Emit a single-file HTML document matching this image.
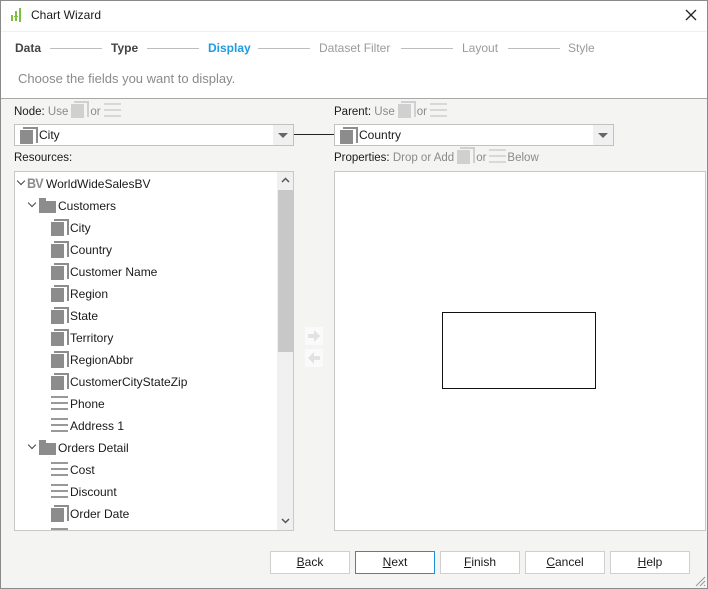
<!DOCTYPE html>
<html><head><meta charset="utf-8"><style>
*{margin:0;padding:0;box-sizing:border-box}
body{width:708px;height:589px;overflow:hidden;background:#f4f4f2;font-family:"Liberation Sans",sans-serif;font-size:12px;color:#1a1a1a;position:relative}
.a{position:absolute;white-space:nowrap}
.frame{position:absolute;left:0;top:0;width:708px;height:589px;border:1px solid #8a8a8a;pointer-events:none}
.dim{position:absolute;width:16px;height:17px}
.dim:before{content:"";position:absolute;left:3px;top:0;width:13px;height:14px;border-top:2px solid #8c8c8c;border-right:2px solid #8c8c8c}
.dim:after{content:"";position:absolute;left:0;top:3px;width:13px;height:14px;background:#8c8c8c}
.dim.l:before{border-color:#d0d0d0}.dim.l:after{background:#d0d0d0}
.fld{position:absolute;width:17px;height:14px;border-top:2px solid #999;border-bottom:2px solid #999}
.fld:after{content:"";position:absolute;left:0;top:4px;width:17px;height:2px;background:#999}
.fld.l{border-color:#d8d8d8}.fld.l:after{background:#d8d8d8}
span.il{position:relative;display:inline-block;vertical-align:middle;margin:-4px 3px 0}
.lab{line-height:14px}
.fold{position:absolute;width:17px;height:12px;background:#8c8c8c}
.fold:before{content:"";position:absolute;left:0;top:-3px;width:7px;height:3px;background:#8c8c8c}
.chev{position:absolute;width:6px;height:6px;border-right:1.5px solid #444;border-bottom:1.5px solid #444;transform:rotate(45deg)}
.combo{position:absolute;height:22px;background:#fff;border:1px solid #c2c2c2}
.combo .dd{position:absolute;right:0;top:0;width:20px;height:20px;background:#f0f0f0}
.combo .dd:after{content:"";position:absolute;left:5px;top:8px;border-left:5px solid transparent;border-right:5px solid transparent;border-top:5px solid #666}
.btn{position:absolute;top:551px;width:80px;height:23px;background:#fff;border:1px solid #cfcfcf;text-align:center;line-height:21px}
.step{position:absolute;top:41px;font-weight:bold;color:#444;font-size:12px}
.ln{position:absolute;top:48px;height:1px;background:#bdbdbd}
.g{color:#8a8a8a}
.t{font-size:11.5px}
</style></head><body>
<div class="a" style="left:0;top:0;width:708px;height:98px;background:#fff"></div>
<div class="a" style="top:98px;left:1px;width:706px;height:1px;background:#a8a8a8"></div>
<div class="a" style="left:1px;top:31px;width:706px;height:1px;background:#f0f0f0"></div>
<svg class="a" style="left:10px;top:7px" width="14" height="16"><rect x="1" y="8" width="2" height="6" fill="#7bc043"/><rect x="5" y="4" width="2" height="10" fill="#7bc043"/><rect x="9" y="1" width="2" height="14" fill="#7bc043"/><rect x="4" y="9" width="4" height="1" fill="#7bc043"/></svg>
<div class="a" style="left:31px;top:8px;font-size:12px">Chart Wizard</div>
<svg class="a" style="left:685px;top:9px" width="12" height="12"><path d="M1 1L11 11M11 1L1 11" stroke="#222" stroke-width="1.3"/></svg>
<div class="step" style="left:15px">Data</div>
<div class="ln" style="left:50px;width:52px"></div>
<div class="step" style="left:111px">Type</div>
<div class="ln" style="left:147px;width:52px"></div>
<div class="step" style="left:208px;color:#1f9be0">Display</div>
<div class="ln" style="left:258px;width:52px"></div>
<div class="step" style="left:319px;color:#9a9a9a;font-weight:normal">Dataset Filter</div>
<div class="ln" style="left:401px;width:52px"></div>
<div class="step" style="left:462px;color:#9a9a9a;font-weight:normal">Layout</div>
<div class="ln" style="left:508px;width:52px"></div>
<div class="step" style="left:568px;color:#9a9a9a;font-weight:normal">Style</div>
<div class="a" style="left:18px;top:71px;color:#8a8a8a;font-size:13px">Choose the fields you want to display.</div>

<div class="a t lab" style="left:14px;top:105px">Node: <span class="g">Use</span><span class="dim l il"></span><span class="g">or</span><span class="fld l il"></span></div>
<div class="combo" style="left:14px;top:124px;width:280px"><div class="dim" style="left:5px;top:2px"></div><div class="a" style="left:24px;top:3px">City</div><div class="dd"></div></div>
<div class="a" style="left:294px;top:134px;width:40px;height:1px;background:#222"></div>
<div class="a t lab" style="left:334px;top:105px">Parent: <span class="g">Use</span><span class="dim l il"></span><span class="g">or</span><span class="fld l il"></span></div>
<div class="combo" style="left:334px;top:124px;width:280px"><div class="dim" style="left:5px;top:2px"></div><div class="a" style="left:24px;top:3px">Country</div><div class="dd"></div></div>
<div class="a t lab" style="left:14px;top:151px">Resources:</div>
<div class="a t lab" style="left:334px;top:151px">Properties: <span class="g">Drop or Add</span><span class="dim l il"></span><span class="g">or</span><span class="fld l il" style="margin-right:1px"></span><span class="g">Below</span></div>

<div class="a" style="left:14px;top:171px;width:280px;height:360px;background:#fff;border:1px solid #c8c8c8;overflow:hidden">
 <div class="a" style="left:262px;top:0;width:17px;height:358px;background:#f0f0f0"></div>
 <div class="a" style="left:263px;top:18px;width:15px;height:162px;background:#c8c8c8"></div>
 <svg class="a" style="left:266px;top:5px" width="9" height="6"><path d="M1 5L4.5 1.5L8 5" stroke="#555" stroke-width="1.5" fill="none"/></svg>
 <svg class="a" style="left:266px;top:346px" width="9" height="6"><path d="M1 1L4.5 4.5L8 1" stroke="#555" stroke-width="1.5" fill="none"/></svg>
</div>
<div class="chev" style="left:18px;top:178px"></div>
<div class="a" style="left:27px;top:175px;font-weight:bold;font-size:14px;color:#8c8c8c;letter-spacing:-1px;transform:scaleX(0.9);transform-origin:left">BV</div>
<div class="a" style="left:46px;top:177px">WorldWideSalesBV</div>
<div class="chev" style="left:29px;top:200px"></div>
<div class="fold" style="left:39px;top:201px"></div>
<div class="a" style="left:58px;top:199px">Customers</div>

<div class="dim" style="left:51px;top:219px"></div><div class="a" style="left:70px;top:221px">City</div>
<div class="dim" style="left:51px;top:241px"></div><div class="a" style="left:70px;top:243px">Country</div>
<div class="dim" style="left:51px;top:263px"></div><div class="a" style="left:70px;top:265px">Customer Name</div>
<div class="dim" style="left:51px;top:285px"></div><div class="a" style="left:70px;top:287px">Region</div>
<div class="dim" style="left:51px;top:307px"></div><div class="a" style="left:70px;top:309px">State</div>
<div class="dim" style="left:51px;top:329px"></div><div class="a" style="left:70px;top:331px">Territory</div>
<div class="dim" style="left:51px;top:351px"></div><div class="a" style="left:70px;top:353px">RegionAbbr</div>
<div class="dim" style="left:51px;top:373px"></div><div class="a" style="left:70px;top:375px">CustomerCityStateZip</div>
<div class="fld" style="left:51px;top:396px"></div><div class="a" style="left:70px;top:397px">Phone</div>
<div class="fld" style="left:51px;top:418px"></div><div class="a" style="left:70px;top:419px">Address 1</div>
<div class="chev" style="left:29px;top:442px"></div>
<div class="fold" style="left:39px;top:443px"></div>
<div class="a" style="left:58px;top:441px">Orders Detail</div>
<div class="fld" style="left:51px;top:462px"></div><div class="a" style="left:70px;top:463px">Cost</div>
<div class="fld" style="left:51px;top:484px"></div><div class="a" style="left:70px;top:485px">Discount</div>
<div class="dim" style="left:51px;top:505px"></div><div class="a" style="left:70px;top:507px">Order Date</div>
<div class="a" style="left:51px;top:528px;width:17px;height:2px;background:#999"></div>

<svg class="a" style="left:305px;top:327px" width="18" height="40"><rect width="18" height="18" fill="#fafafa"/><path d="M3 7h6V3l6 6-6 6v-4H3z" fill="#e2e2e2"/><rect y="22" width="18" height="18" fill="#fafafa"/><path d="M15 29H9v-4l-6 6 6 6v-4h6z" fill="#e2e2e2"/></svg>

<div class="a" style="left:334px;top:171px;width:372px;height:360px;background:#fff;border:1px solid #c8c8c8"></div>
<div class="a" style="left:442px;top:312px;width:154px;height:77px;border:1px solid #111;background:#fff"></div>

<div class="btn" style="left:270px"><u>B</u>ack</div>
<div class="btn" style="left:355px;border-color:#1f8fd8"><u>N</u>ext</div>
<div class="btn" style="left:440px"><u>F</u>inish</div>
<div class="btn" style="left:525px"><u>C</u>ancel</div>
<div class="btn" style="left:610px"><u>H</u>elp</div>
<svg class="a" style="left:694px;top:575px" width="12" height="12"><path d="M11 2L2 11M11 6L6 11M11 10L10 11" stroke="#999" stroke-width="1"/></svg>
<div class="frame"></div>
</body></html>
